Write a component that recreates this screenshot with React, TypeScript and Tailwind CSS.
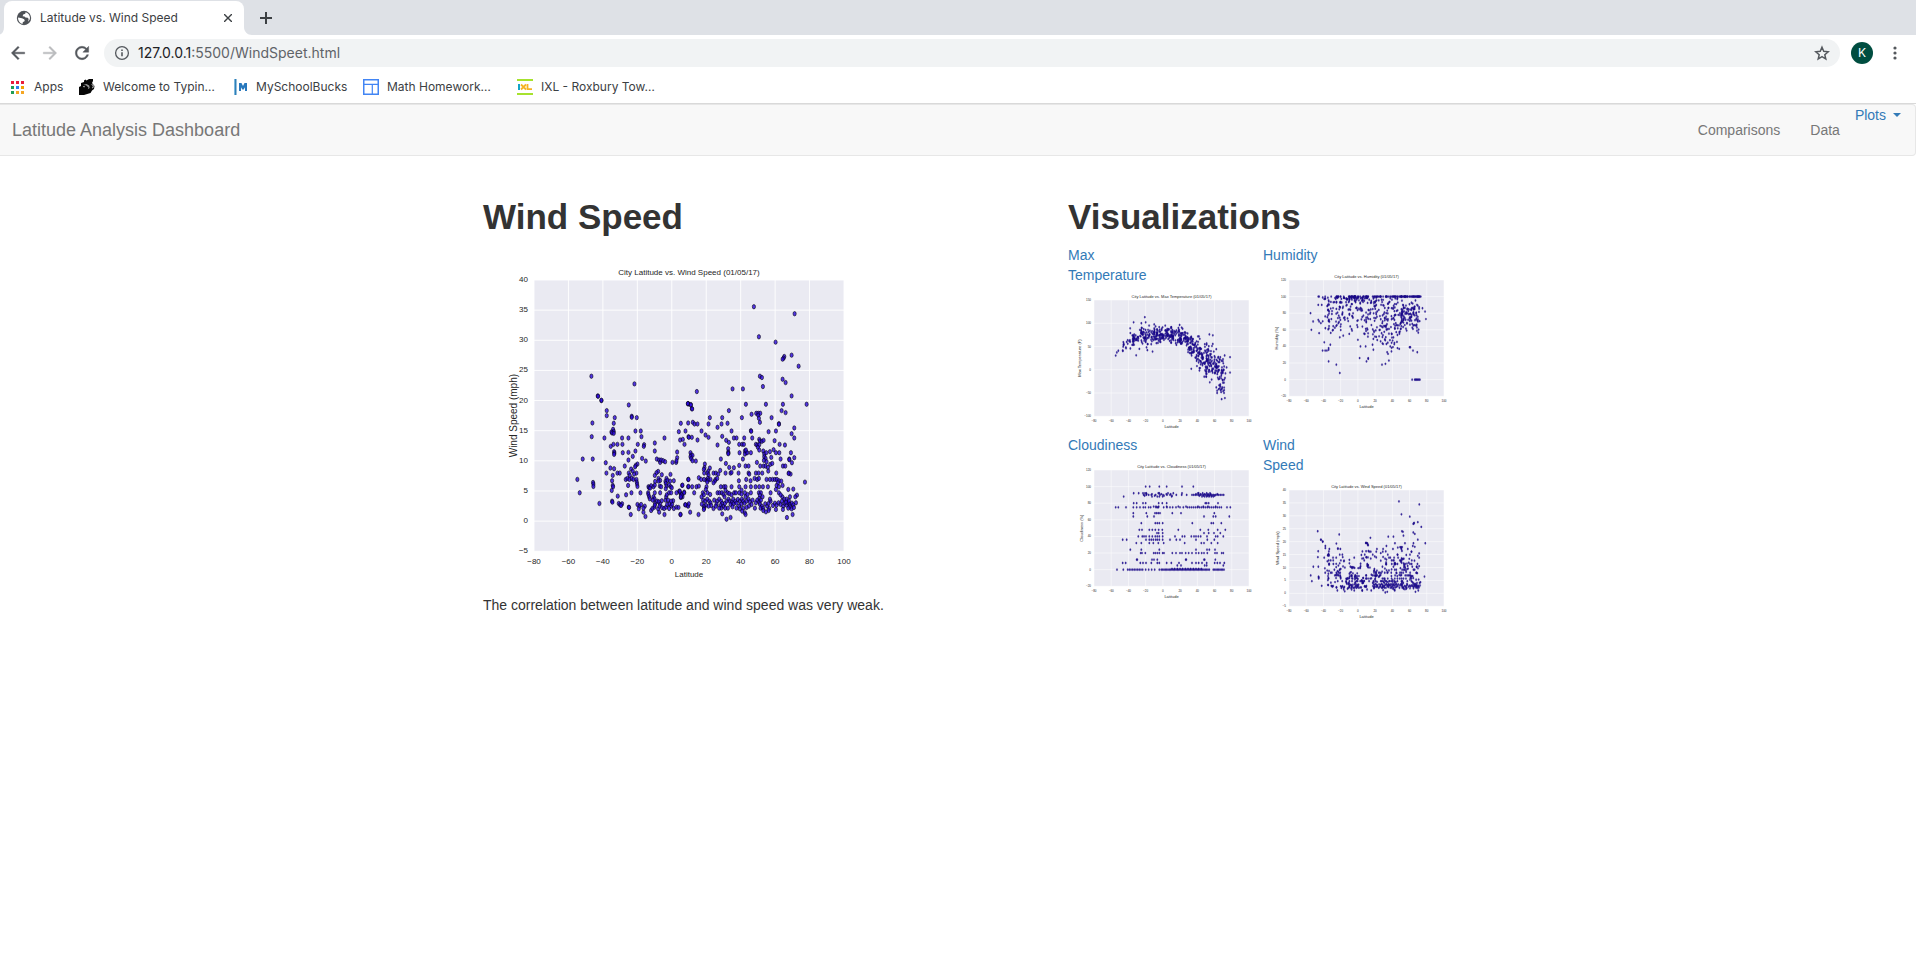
import React from "react";

type Point = [number, number];

const pairs = (s: string): Point[] =>
  s
    .trim()
    .split(/\s+/)
    .map((p) => p.split(",").map(Number) as Point);

/* Digitised wind samples: grid of 929 x 812 units, origin at the top left of the plot. */
const southSamples = `215,2 297,15 231,32 231,47 255,53 306,49 306,52 321,53 188,69 252,70 186,110 224,114 250,88 252,94 245,96 247,99 252,100 317,93 333,93
335,110 277,114 296,114 404,114 375,129 243,139 251,133 263,133 278,133 324,133 343,134 342,139 375,153 317,153 253,155 254,159 253,163 279,158
296,157 159,177 189,177 296,180 309,169 337,175 348,183 228,188 285,198 323,192 318,196 316,200 381,177 388,180 391,187 394,180 400,182 406,185
428,187 439,187 442,173 442,156 440,182 242,204 253,206 230,219 249,226 263,219 270,219 304,207 297,219 309,213 320,219 313,222 300,226 143,238
288,238 293,235 299,238 306,235 311,238 320,238 247,242 295,256 190,247 191,252 191,259 249,256 250,260 246,271 321,246 322,252 323,259 150,278
332,278 305,278 289,284 264,288 247,303 248,306 209,310 267,310 271,314 277,311 274,316 297,321 298,322 303,343 323,313 329,318 327,326 334,313
341,336 345,318 347,349 341,324 385,214 380,218 375,226 396,224 386,235 422,223 391,241 386,243 376,244 410,235 407,244 413,241 421,243 432,242
356,260 358,263 364,257 371,260 375,255 361,264 390,258 394,260 408,250 410,258 418,255 423,260 426,263 408,266 355,278 356,283 375,278 391,278
358,290 360,296 371,290 374,296 369,300 376,310 382,303 387,305 396,302 391,312 364,331 368,325 374,321 375,315 385,326 388,336 389,318 397,323
404,343 403,325 409,321 412,313 407,300 409,290 411,284 418,278 424,278 415,300 419,311 424,318 427,312 430,302 424,303 432,325 440,321 446,322
452,343 418,325 457,256 448,273 451,278 455,284 463,276 458,290 440,278 453,292 466,314 473,316 475,238 475,260 447,95 467,93 453,70 475,69
475,12 451,120 459,118 464,133 476,110`;

const northSamples = `25,11 33,14 36,26 198,13 258,13 309,13 380,13 147,32 305,32 317,38 215,43 229,40 235,40 241,40 235,46 237,55 240,67 90,53 127,53
186,53 275,53 39,67 44,72 53,72 86,72 125,72 143,70 113,82 297,71 297,73 343,84 65,93 155,93 213,92 214,94 266,95 288,93 335,101 343,114
77,105 86,112 127,109 162,114 170,114 193,114 217,114 238,118 27,112 36,112 53,120 139,121 147,127 240,123 246,124 251,121 284,122 113,135
178,133 187,133 192,133 228,133 232,135 238,134 299,133 315,135 145,146 234,142 238,150 145,156 146,159 145,161 179,158 195,153 199,158 195,162
202,158 213,158 198,150 250,153 253,162 259,158 270,155 281,149 288,158 298,158 333,158 32,158 34,165 38,166 32,170 34,176 38,182 48,183
123,177 189,177 253,170 257,175 252,181 274,172 302,177 328,177 343,173 336,188 328,179 75,192 138,190 231,187 260,185 271,193 277,190 162,203
178,196 197,198 206,198 241,198 251,198 257,198 264,202 148,202 309,198 316,198 74,203 72,208 90,204 121,211 85,213 73,219 83,219 101,219
108,219 115,222 86,225 137,219 152,219 155,217 176,219 206,219 208,222 228,219 236,219 247,219 289,219 265,213 327,219 332,222 326,220 57,233
64,238 73,238 80,240 84,235 86,240 82,246 92,238 107,238 112,235 105,243 101,248 26,238 177,242 199,238 212,242 224,235 232,238 237,235
260,238 270,238 278,238 285,238 291,238 297,242 304,243 294,248 375,246 8,255 26,259 37,260 50,260 57,258 80,260 123,260 132,260 137,260
155,260 178,260 197,260 213,260 227,260 238,260 249,260 264,260 290,256 297,260 308,256 325,268 340,267 0,273 13,278 43,278 5,285 3,290
69,278 78,268 83,278 91,283 72,284 65,290 113,278 119,278 126,278 131,283 137,271 143,278 148,280 134,290 155,284 163,278 168,278 178,278
185,270 185,282 195,278 197,290 203,283 213,278 237,278 243,278 240,285 248,290 238,295 272,278 288,268 297,278 307,290 302,284 313,297 330,290
351,285 346,290 70,300 76,303 82,297 88,303 92,308 94,316 86,318 78,315 72,318 66,312 73,324 72,328 103,300 112,303 110,312 118,297 124,303
127,310 122,316 131,318 135,310 140,303 146,297 150,303 156,306 152,313 160,297 166,303 161,311 158,320 170,309 174,298 180,303 186,297 190,303
184,312 178,318 194,309 200,303 206,297 210,305 218,300 215,313 207,318 200,322 190,324 180,326 170,324 144,324 136,324 124,324 118,324 101,325
108,318 225,324 228,308 232,300 238,306 243,300 240,312 246,318 242,324 250,324 256,311 262,318 268,325 266,310 272,303 266,331 258,335 250,331
270,297 279,316 285,309 288,328 290,315 296,308 302,313 306,303 310,318 309,328 314,309 320,315 325,308 330,313 330,320 336,309 335,326 340,314
342,322 348,308 320,297 327,302 325,324 318,306 17,314 25,318 31,336 2,343 27,311 56,343 127,341 140,357 152,352 187,333 195,338 197,343
321,352 338,343`;

const strongSamples = `852,381 974,402 867,471 917,487 943,530 941,535 938,538 965,526 986,559 365,589 870,589 876,593 938,598 947,608 494,612 879,620
788,627 819,627 681,635 384,648 385,649 965,648 395,661 654,671 663,675 667,687`;

const shift = (pts: Point[], dx: number, dy: number): Point[] =>
  pts.map(([x, y]) => [((x + dx) / 929) * 180 - 80, 40 - ((y + dy) / 812) * 45]);

const wind: Point[] = [
  ...shift(pairs(southSamples), -13, 359),
  ...shift(pairs(northSamples), 437, 359),
  ...shift(pairs(strongSamples), -193, -301),
];

const random = (seed: number) => () => {
  seed = (seed * 1664525 + 1013904223) % 4294967296;
  return seed / 4294967296;
};

const interpolate = (knots: Point[], x: number) => {
  for (let i = 1; i < knots.length; i++) {
    const [x0, y0] = knots[i - 1];
    const [x1, y1] = knots[i];
    if (x <= x1) return y0 + ((x - x0) / (x1 - x0)) * (y1 - y0);
  }
  return knots[knots.length - 1][1];
};

const temperatureRandom = random(7);
const temperature: Point[] = [
  ...wind
    .filter(([lat]) => lat < 73)
    .map(([lat]): Point => {
      const r = temperatureRandom;
      const mean = interpolate(
        [[-60, 36], [-50, 45], [-40, 61], [-30, 68], [-20, 73], [0, 76], [15, 77], [25, 69], [33, 52], [42, 36], [50, 22], [60, 9], [66, -3], [74, -15]],
        lat,
      );
      const spread = interpolate([[-60, 6], [-40, 16], [-20, 21], [0, 18], [20, 19], [35, 28], [45, 30], [55, 40], [70, 50], [80, 50]], lat);
      return [lat, mean + (r() + r() + r() - 1.5) * spread];
    }),
  ...pairs(
    "-34,102 -21,113 -20,102 -25,100 -38,89 -16,95 -31,31 -12,39 -19,48 -18,42 54,76 58,74 57,51 78,27 78,-6 74,5 68,-42 70,-46 71,-50 72,-61 66,-40 63,-45 63,-50 67,-44 69,-38 62,-38 48,-15 33,2",
  ),
];

const humidityRandom = random(19);
const humidity: Point[] = [
  ...wind
    .filter(([lat]) => lat > -42 && lat < 72)
    .map(([lat]): Point => {
      const r = humidityRandom;
      if (r() < (lat > -26 ? 0.22 : 0.03)) return [lat, 100];
      const depth = interpolate([[-42, 46], [-20, 44], [0, 40], [12, 48], [25, 56], [40, 62], [52, 44], [72, 46]], lat);
      const skew = lat > -28 && lat < 8 ? Math.pow(r(), 2) : lat < 50 ? Math.pow(r(), 1.1) : (r() + r()) / 2;
      return [lat, 99 - skew * depth];
    }),
  ...pairs(
    "-46,100 -45,100 -46,90 -42,90 -38,100 -31,100 -55,80 -54,60 -52,70 -46,72 -45,70 -43,68 -45,56 -39,45 -41,35 -38,35 -36,35 -34,38 -34,36 -34,22 -32,42 -25,18 -21,8 -21,51 -17,53 -10,55 0,48 3,40 2,26 10,22 12,25 12,26 9,40 18,36 17,42 28,18 32,19 36,23 35,31 34,33 39,34 46,38 48,37 60,39 61,39 64,35 69,33 18,49 78,82 79,73 75,86 63,0 66,0 67,0 68,0 69,0 70,0 71,0 72,0 64,100 66,100 68,100 70,100 72,100 73,100 52,100 55,100",
  ),
];

const range = (from: number, to: number, step: number) =>
  Array.from({ length: Math.floor((to - from) / step) + 1 }, (_, i) => from + i * step);

const cloudRows: [number, number[]][] = [
  [100, [227, 239, 268, 290, 336, 370]],
  [92, [191, 206, 219, 225, 229, 265, 268, 294, 310, 336, 384, 386, 398, 410, 420]],
  [91, [230, 246, 274, 289, 302, 378, 392, 404, 414, 422, 442]],
  [90, [221, 229, 236, 244, 257, 270, 279, 291, 300, 319, 335, 350, ...range(366, 462, 5)]],
  [89, [224, 254, 282, 306, 388, 400, 412, 418, 426, 434]],
  [88, [161, 246, 262, 268, 278, 305, 396, 404, 410, 417, 424, 430]],
  [80, [191, 200, 219, 227, 266, 277, 290, 406, 410, 416, 444]],
  [76, [251, 258, 266, 290, 325, 348, 384, 400, 414, 437]],
  [75, [137, 145, 168, 190, 200, 210, 220, 226, 236, 242, 258, 262, 265, 281, 291, 300, 308, 318, 330, 340, 352, ...range(358, 455, 6), 471, 481]],
  [68, [190, 229, 255, 260, 265, 270, 307, 333, 433]],
  [64, [190, 232, 252, 402, 430, 437, 478]],
  [56, [214, 256, 262, 268, 278, 367, 424, 430, 454]],
  [48, [208, 216, 238, 247, 256, 266, 277, 325, 391, 415, 443, 466]],
  [44, [261, 266, 278, 402, 416, 432, 451]],
  [40, [205, 217, 222, 228, 238, 247, 256, 262, 268, 278, 315, 337, 344, 364, 372, 378, 385, 392, 411, 437, 443, 460]],
  [36, [158, 170, 228, 238, 244, 250, 257, 262, 268, 278, 300, 319, 330, 378, 412, 433]],
  [32, [199, 214, 238, 250, 265, 281, 344, 394, 402, 424, 443]],
  [24, [181, 214, 268, 378, 411, 418, 435]],
  [20, [212, 216, 226, 251, 256, 262, 268, 278, 282, 307, 318, 330, 336, 347, 356, 366, 378, 386, 395, 402, 412, 435, 441, 455, 460]],
  [12, [200, 202, 246, 252, 262, 347, 349, 402, 404, 436]],
  [8, [158, 167, 211, 219, 228, 244, 262, 268, 290, 304, 327, 366, 378, 386, 396, 410, 434, 442, 450, 463]],
  [5, [322, 333, 404, 410, 460]],
  [1, range(306, 400, 8)],
  [0, [141, 160, ...range(173, 215, 5), ...range(218, 262, 9), 268, ...range(274, 420, 4), ...range(430, 465, 4)]],
];
const cloudiness: Point[] = cloudRows.flatMap(([value, xs]) => xs.map((x): Point => [((x - 72) / 465) * 180 - 80, value]));

type ChartProps = {
  title: string;
  yTitle: string;
  data: Point[];
  yMin: number;
  yMax: number;
  yStep: number;
  yTitleX: number;
  large?: boolean;
};

function Chart({ title, yTitle, data, yMin, yMax, yStep, yTitleX, large }: ChartProps) {
  const w = large ? 402 : 202;
  const h = large ? 350 : 150;
  const left = large ? 51 : 26;
  const top = h * 0.1;
  const pw = large ? 310 : 155;
  const ph = h * 0.775;
  const px = (v: number) => left + ((v + 80) / 180) * pw;
  const py = (v: number) => top + ((yMax - v) / (yMax - yMin)) * ph;
  const xTicks = range(-80, 100, 20);
  const yTicks = range(yMin, yMax, yStep);
  const label = (v: number) => String(v).replace("-", "−");
  return (
    <svg
      viewBox={`0 0 ${w} ${h}`}
      role="img"
      aria-label={title}
      className={
        large
          ? "block h-[350px] w-[402px] max-w-full fill-[#262626] font-['Liberation_Sans',sans-serif]"
          : "block h-[150px] w-[202px] fill-[#262626] font-['Liberation_Sans',sans-serif]"
      }
    >
      <rect x={left} y={top} width={pw} height={ph} fill="#eaeaf2" />
      <g stroke="#fff" strokeWidth={large ? 0.9 : 0.5}>
        {xTicks.map((v) => (
          <line key={v} x1={px(v)} x2={px(v)} y1={top} y2={top + ph} />
        ))}
        {yTicks.map((v) => (
          <line key={v} x1={left} x2={left + pw} y1={py(v)} y2={py(v)} />
        ))}
      </g>
      <g
        fill={large ? "#2a08e0" : "#1c0a96"}
        stroke={large ? "#000" : "#140a60"}
        strokeWidth={large ? 0.8 : 0.2}
        fillOpacity={large ? 0.8 : 0.85}
        strokeOpacity={0.7}
      >
        {data.map(([x, y], i) => (
          <ellipse key={i} cx={px(x)} cy={py(y)} rx={large ? 1.6 : 0.8} ry={large ? 2.2 : 1.15} />
        ))}
      </g>
      <g fontSize={large ? 8 : 3}>
        {xTicks.map((v) => (
          <text key={v} x={px(v)} y={large ? 319 : 137} textAnchor="middle">
            {label(v)}
          </text>
        ))}
        {yTicks.map((v) => (
          <text key={v} x={large ? 45 : 23} y={py(v) + (large ? 2 : 1)} textAnchor="end">
            {label(v)}
          </text>
        ))}
      </g>
      <g fontSize={large ? 8 : 4} textAnchor="middle">
        <text x={left + pw / 2} y={large ? 30 : 13}>
          {title}
        </text>
        <text x={left + pw / 2} y={large ? 332 : 143}>
          Latitude
        </text>
      </g>
      <text fontSize={large ? 10 : 4} textAnchor="middle" transform={`translate(${yTitleX} ${top + ph / 2}) rotate(-90)`}>
        {yTitle}
      </text>
    </svg>
  );
}

const windChart = { title: "City Latitude vs. Wind Speed (01/05/17)", yTitle: "Wind Speed (mph)", data: wind, yMin: -5, yMax: 40, yStep: 5 };

const plots: { name: string; chart: ChartProps }[] = [
  { name: "Max Temperature", chart: { title: "City Latitude vs. Max Temperature (01/05/17)", yTitle: "Max Temperature (F)", data: temperature, yMin: -100, yMax: 150, yStep: 50, yTitleX: 13 } },
  { name: "Humidity", chart: { title: "City Latitude vs. Humidity (01/05/17)", yTitle: "Humidity (%)", data: humidity, yMin: -20, yMax: 120, yStep: 20, yTitleX: 15 } },
  { name: "Cloudiness", chart: { title: "City Latitude vs. Cloudiness (01/05/17)", yTitle: "Cloudiness (%)", data: cloudiness, yMin: -20, yMax: 120, yStep: 20, yTitleX: 15 } },
  { name: "Wind Speed", chart: { ...windChart, yTitleX: 16 } },
];

/* Browser icons */

const GlobeIcon = () => (
  <svg viewBox="0 0 16 16" className="size-4 shrink-0">
    <circle cx="8" cy="8" r="7.2" fill="#5f6368" />
    <circle cx="8" cy="8" r="6.7" fill="#4d5156" />
    <path d="M2.2 7.6 6 8.2l2.2 1.1.6 1.6-2 1.3-.3 1.8C3.9 13.3 2 10.9 2 8zM9.6 2.2 9.2 3.8 7.2 4.6 6.6 6.2l1.9.2 1 1.1 2.2.2 1 1.4-.8 2.6c1.2-1 2.1-2.3 2.1-3.9 0-2.6-1.9-4.9-4.4-5.6z" fill="#fff" />
  </svg>
);

const BackIcon = ({ className }: { className: string }) => (
  <svg viewBox="0 0 24 24" className={className}>
    <path d="M20 11H7.83l5.59-5.59L12 4l-8 8 8 8 1.41-1.41L7.83 13H20v-2z" fill="currentColor" stroke="currentColor" strokeWidth="0.5" />
  </svg>
);

const ReloadIcon = () => (
  <svg viewBox="0 0 24 24" className="size-5">
    <path
      d="M17.65 6.35C16.2 4.9 14.21 4 12 4c-4.42 0-7.99 3.58-7.99 8s3.57 8 7.99 8c3.73 0 6.84-2.55 7.73-6h-2.08c-.82 2.33-3.04 4-5.65 4-3.31 0-6-2.69-6-6s2.69-6 6-6c1.66 0 3.14.69 4.22 1.78L13 11h7V4l-2.35 2.35z"
      fill="currentColor"
      stroke="currentColor"
      strokeWidth="0.5"
    />
  </svg>
);

const AppsIcon = () => (
  <svg viewBox="0 0 13 13" className="size-[13px]">
    {["#ea1d3c", "#ea1d3c", "#ea1d3c", "#1f9d55", "#2f80ed", "#f2a100", "#1f9d55", "#f5a623", "#f5a623"].map((c, i) => (
      <rect key={i} x={(i % 3) * 5} y={Math.floor(i / 3) * 5} width="3" height="3" fill={c} />
    ))}
  </svg>
);

const HorseIcon = () => (
  <svg viewBox="0 0 16 16" className="size-4">
    <path d="M5 1.5 6.5.5 7.5 1.5 10 0h4v2l-1 2 2.5 3-.5 3-2 1.5L11.5 14 5 16H0V8l2-1V4l3-1z" fill="#070707" />
    <path d="m4 6 3 .3 2.5 2.2-.7 1.700 1.900-1.200-.5-2.500L7.500 5z" fill="#999" />
    <path d="m12 5 2 2-1 2.5 1.5-1V6zM4 7l2 .5-1 1z" fill="#fff" />
  </svg>
);

const BucksIcon = () => (
  <svg viewBox="0 0 14 16" className="h-4 w-3.5">
    <path d="M0 0h1v16H0z" fill="#7db7dd" />
    <path d="M1 0h1.5v16H1z" fill="#2f80b8" />
    <path d="M5 12V4h2.5l1.5 3 1.5-3H13v8h-2V8.2L9.700 10.500H8.300L7 8.200V12z" fill="#2878bd" />
  </svg>
);

const HomeworkIcon = () => (
  <svg viewBox="0 0 16 16" className="size-4">
    <path d="M.75.75h14.5v14.5H.75z" fill="#fff" stroke="#4285f4" strokeWidth="1.5" />
    <path d="M1 5.3h14M9.3 5.3V15" stroke="#4285f4" strokeWidth="1.2" />
  </svg>
);

const IxlIcon = () => (
  <svg viewBox="0 0 16 16" className="size-4">
    <path d="M0 0h16v2H0zM0 14h16v2H0z" fill="#a6e22e" />
    <path d="M1 5h2v6H1z" fill="#12a5c8" />
    <path d="m4 5.500 5 5M9 5.500l-5 5" stroke="#f5b324" strokeWidth="1.8" />
    <path d="M10.500 5v5.200H15" stroke="#f5b324" strokeWidth="1.8" fill="none" />
  </svg>
);

const bookmarks = [
  { name: "Apps", icon: <AppsIcon />, box: "w-[68px] gap-2.5" },
  { name: "Welcome to Typin…", icon: <HorseIcon />, box: "w-[155px] gap-2" },
  { name: "MySchoolBucks", icon: <BucksIcon />, box: "w-[129px] gap-2" },
  { name: "Math Homework…", icon: <HomeworkIcon />, box: "w-[154px] gap-2" },
  { name: "IXL - Roxbury Tow…", icon: <IxlIcon />, box: "gap-2" },
];

function BrowserBar() {
  return (
    <header className="font-[Inter,sans-serif] text-[#3c4043]">
      <div className="flex h-[35px] items-end bg-[#dee1e6]">
        <svg viewBox="0 0 4 8" className="h-2 w-1">
          <path d="M4 0v8H0V7.5C2.5 6.5 4 4 4 0z" fill="#fff" />
        </svg>
        <div className="flex h-[34px] w-60 items-center rounded-t-lg bg-white pr-2 pb-px pl-3">
          <GlobeIcon />
          <span className="ml-2 flex-1 text-xs whitespace-nowrap">Latitude vs. Wind Speed</span>
          <button aria-label="Close tab" className="p-1">
            <svg viewBox="0 0 8 8" className="size-2 stroke-[#3c4043] stroke-[1.4]">
              <path d="m0 0 8 8M8 0 0 8" />
            </svg>
          </button>
        </div>
        <svg viewBox="0 0 8 8" className="size-2">
          <path d="M0 0v8h8C3.5 8 0 4.5 0 0z" fill="#fff" />
        </svg>
        <button aria-label="New tab" className="ml-2 self-center">
          <svg viewBox="0 0 12 12" className="size-3 stroke-[#3c4043] stroke-2">
            <path d="M6 0v12M0 6h12" />
          </svg>
        </button>
      </div>
      <div className="flex h-9 items-center text-[#54585d]">
        <button aria-label="Back" className="ml-2">
          <BackIcon className="size-5" />
        </button>
        <button aria-label="Forward" className="ml-3 text-[#babcbe]">
          <BackIcon className="size-5 rotate-180" />
        </button>
        <button aria-label="Reload" className="ml-3">
          <ReloadIcon />
        </button>
        <div className="ml-3 flex h-7 flex-1 items-center rounded-full bg-[#f1f3f4] px-2.5">
          <svg viewBox="0 0 16 16" className="size-4" fill="none" stroke="currentColor">
            <circle cx="8" cy="8" r="6.4" strokeWidth="1.3" />
            <path d="M8 7.2v4M8 4.5V6" strokeWidth="1.6" />
          </svg>
          <p className="ml-2 text-sm">
            <span className="text-[#202124]">127.0.0.1</span>
            <span className="text-[#5f6368]">:5500/WindSpeet.html</span>
          </p>
          <button aria-label="Bookmark this page" className="ml-auto">
            <svg viewBox="0 0 24 24" className="size-4" fill="none" stroke="currentColor" strokeWidth="2.2">
              <path d="m12 3.3 2.6 6.2 6.7.6-5.1 4.4 1.5 6.5L12 17.5 6.3 21l1.5-6.5-5.1-4.4 6.7-.6z" />
            </svg>
          </button>
        </div>
        <button aria-label="Profile" className="ml-[11px] grid size-[22px] place-items-center rounded-full bg-[#004d40] text-xs text-white">
          K
        </button>
        <button aria-label="Menu" className="mr-[13px] ml-3.5">
          <svg viewBox="0 0 16 16" className="size-4 fill-current">
            <circle cx="8" cy="3" r="1.6" />
            <circle cx="8" cy="8" r="1.6" />
            <circle cx="8" cy="13" r="1.6" />
          </svg>
        </button>
      </div>
      <nav aria-label="Bookmarks" className="flex h-[33px] items-center border-b border-[#d9d9d9] pl-[11px] text-xs">
        {bookmarks.map((b) => (
          <a key={b.name} href="#" className={`flex shrink-0 items-center whitespace-nowrap ${b.box}`}>
            {b.icon}
            {b.name}
          </a>
        ))}
      </nav>
    </header>
  );
}

export default function App() {
  return (
    <div className="min-h-screen bg-white font-['Liberation_Sans',Arial,sans-serif] text-sm text-[#333]">
      <BrowserBar />
      <nav className="flex h-[52px] items-center rounded-r border border-l-0 border-[#e7e7e7] bg-[#f8f8f8] pr-3.5 pl-3 text-[#777]">
        <a href="#" className="text-lg">
          Latitude Analysis Dashboard
        </a>
        <div className="ml-auto flex h-full items-center">
          <a href="#" className="mr-[30px]">
            Comparisons
          </a>
          <a href="#" className="mr-[15px]">
            Data
          </a>
          <button className="flex items-center gap-[7px] self-start text-[#337ab7]">
            Plots
            <svg viewBox="0 0 8 4" className="h-1 w-2 fill-current">
              <path d="M0 0h8L4 4z" />
            </svg>
          </button>
        </div>
      </nav>
      <main className="mx-auto grid max-w-[1170px] grid-cols-2 pt-[41px]">
        <section className="pl-[110px]">
          <h1 className="mb-2 text-[35px] leading-10 font-bold">Wind Speed</h1>
          <Chart {...windChart} yTitleX={34} large />
          <p>The correlation between latitude and wind speed was very weak.</p>
        </section>
        <section className="pl-[110px]">
          <h1 className="mb-2 text-[35px] leading-10 font-bold">Visualizations</h1>
          <div className="grid grid-cols-[195px_195px]">
            {plots.map((p) => (
              <a key={p.name} href="#" className="block text-[#337ab7]">
                <span className="block w-[68px]">{p.name}</span>
                <Chart {...p.chart} />
              </a>
            ))}
          </div>
        </section>
      </main>
    </div>
  );
}
